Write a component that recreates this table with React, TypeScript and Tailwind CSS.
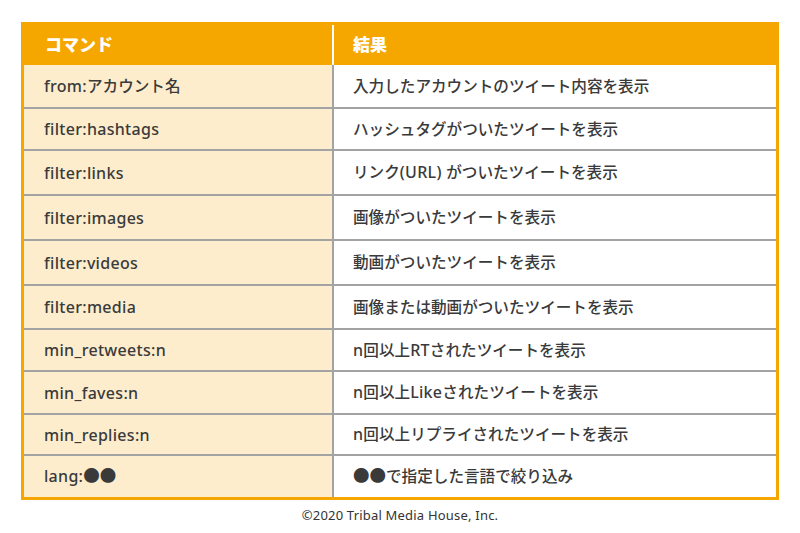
import React from "react";

const rows: { cmd: string; res: string; h: string }[] = [
  { cmd: "from:アカウント名", res: "入力したアカウントのツイート内容を表示", h: "h-[42px]" },
  { cmd: "filter:hashtags", res: "ハッシュタグがついたツイートを表示", h: "h-[42px]" },
  { cmd: "filter:links", res: "リンク(URL) がついたツイートを表示", h: "h-[45px]" },
  { cmd: "filter:images", res: "画像がついたツイートを表示", h: "h-[45px]" },
  { cmd: "filter:videos", res: "動画がついたツイートを表示", h: "h-[45px]" },
  { cmd: "filter:media", res: "画像または動画がついたツイートを表示", h: "h-[44px]" },
  { cmd: "min_retweets:n", res: "n回以上RTされたツイートを表示", h: "h-[42px]" },
  { cmd: "min_faves:n", res: "n回以上Likeされたツイートを表示", h: "h-[43px]" },
  { cmd: "min_replies:n", res: "n回以上リプライされたツイートを表示", h: "h-[41px]" },
  { cmd: "lang:●●", res: "●●で指定した言語で絞り込み", h: "h-[43px]" },
];

function Mixed({ text }: { text: string }) {
  const parts = text.split(/([\x20-\x7E]+|●+)/).filter((p) => p.length > 0);
  return (
    <span>
      {parts.map((p, i) => {
        if (/^[\x20-\x7E]+$/.test(p)) {
          return (
            <span key={i} className="text-[16px] tracking-[0.3px]">
              {p}
            </span>
          );
        }
        if (/^●+$/.test(p)) {
          return (
            <span key={i} className="text-[16.5px]">
              {p}
            </span>
          );
        }
        return (
          <span key={i} className="text-[15.6px]">
            {p}
          </span>
        );
      })}
    </span>
  );
}

export default function App() {
  return (
    <div
      className="w-[800px] h-[533px] bg-white text-[#3a3a3a]"
      style={{ fontFamily: '"Noto Sans", "Noto Sans CJK JP", sans-serif' }}
    >
      <div className="pt-[22px] pl-[21px]">
        <div className="w-[758px] border-x-[3px] border-b-[3px] border-[#f5a700]">
          <div className="grid grid-cols-[308px_444px] h-[43px] bg-[#f5a700] text-white font-black text-[17px]">
            <div className="flex items-center pl-[21px] pt-[2px]">コマンド</div>
            <div className="flex items-center pl-[19px] pt-[2px] border-l-2 border-white mt-[3px]">
              <span className="-mt-[3px]">結果</span>
            </div>
          </div>
          {rows.map((r, i) => (
            <div
              key={i}
              className={`grid grid-cols-[308px_444px] ${r.h} ${i > 0 ? "border-t-2 border-[#a3a3a3]" : ""} font-medium`}
            >
              <div className="flex items-center pl-[20px] bg-[#fdedcd]">
                <Mixed text={r.cmd} />
              </div>
              <div className="flex items-center pl-[19px] bg-white border-l-2 border-[#a3a3a3]">
                <Mixed text={r.res} />
              </div>
            </div>
          ))}
        </div>
        <div className="w-[758px] mt-[6px] text-center text-[13px] leading-[18px] tracking-[0.2px] text-[#333]">
          ©2020 Tribal Media House, Inc.
        </div>
      </div>
    </div>
  );
}
